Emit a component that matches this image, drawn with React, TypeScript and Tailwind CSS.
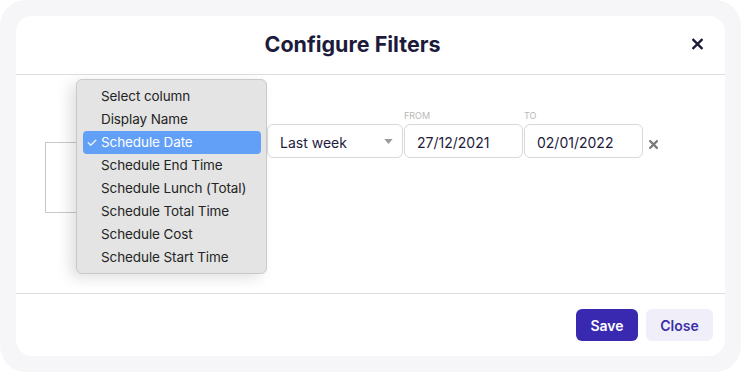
import { useState } from "react";

const columns = [
  "Select column",
  "Display Name",
  "Schedule Date",
  "Schedule End Time",
  "Schedule Lunch (Total)",
  "Schedule Total Time",
  "Schedule Cost",
  "Schedule Start Time",
];

function CloseIcon({ className, width = 2.6 }: { className?: string; width?: number }) {
  return (
    <svg viewBox="0 0 12 12" className={className} fill="none" stroke="currentColor" strokeWidth={width} strokeLinecap="square">
      <path d="M1.5 1.5 10.5 10.5M10.5 1.5 1.5 10.5" />
    </svg>
  );
}

function ColumnMenu({ selected }: { selected: string }) {
  return (
    <div className="absolute left-[60px] top-[4px] w-[191px] h-[195px] rounded-md border border-[#c9c9c9] bg-[#e3e4e3] pt-[5px] pl-[6px] pr-[5px] text-[13.5px] tracking-[-0.1px] shadow-[-6px_4px_14px_rgba(0,0,0,0.12)]">
      {columns.map((c) => {
        const active = c === selected;
        return (
          <div
            key={c}
            className={
              active
                ? "relative h-[23px] flex items-center pl-[18px] rounded-[4px] bg-[#62a0f8] text-white"
                : "relative h-[23px] flex items-center pl-[18px] text-[#242424]"
            }
          >
            {active && <span className="absolute left-[3px] text-[13px]">✓</span>}
            {c}
          </div>
        );
      })}
    </div>
  );
}

export default function App() {
  const [column] = useState("Schedule Date");

  return (
    <div className="w-[741px] h-[372px] bg-white font-['Inter',sans-serif]">
      <div className="h-full rounded-[26px] bg-[#f6f6f9] p-4">
        <div className="h-full rounded-[16px] bg-white flex flex-col">
          <div className="h-[59px] shrink-0 border-b border-[#dedede] relative flex items-center justify-center pr-[36px]">
            <h2 className="font-bold text-[21.5px] text-[#1d1b3c] tracking-[0px] mt-[-2px]">
              Configure Filters
            </h2>
            <button className="absolute right-[22px] top-[22px] text-[#1d1b3c]">
              <CloseIcon className="w-[11px] h-[12px]" />
            </button>
          </div>

          <div className="flex-1 relative text-[14px]">
            <div className="flex items-start pl-[29px] pt-[49px]">
              <div className="w-[60px] h-[71px] mt-[18px] border border-[#c8c8c8] border-r-0 shrink-0" />
              <div className="w-[161px] h-[34px] border-r-2 border-[#2b1d9e] rounded-r-md shrink-0" />
              <div className="ml-[1px] w-[136px] h-[34px] rounded-md border border-[#d8d8d8] flex items-center pl-[12px] pr-[9px] text-[#1d1b3c]">
                <span className="flex-1 mt-[2px]">Last week</span>
                <svg viewBox="0 0 10 6" className="w-[9px] h-[5px] text-[#9a9a9a]" fill="currentColor">
                  <path d="M0 0h10L5 6z" />
                </svg>
              </div>
              <div className="relative ml-[1px]">
                <span className="absolute left-[0px] -top-[15px] text-[9px] text-[#b8b8b8]">FROM</span>
                <div className="w-[119px] h-[34px] rounded-md border border-[#d8d8d8] flex items-center pl-[12px] pt-[2px] text-[#1d1b3c]">
                  27/12/2021
                </div>
              </div>
              <div className="relative ml-[1px]">
                <span className="absolute left-[0px] -top-[15px] text-[9px] text-[#b8b8b8]">TO</span>
                <div className="w-[119px] h-[34px] rounded-md border border-[#d8d8d8] flex items-center pl-[12px] pt-[2px] text-[#1d1b3c]">
                  02/01/2022
                </div>
              </div>
              <button className="ml-[6px] h-[34px] pt-[6px] flex items-center text-[#7a7a7a]">
                <CloseIcon className="w-[9px] h-[9px]" width={3} />
              </button>
            </div>
            <ColumnMenu selected={column} />
          </div>

          <div className="h-[63px] shrink-0 border-t border-[#dedede] flex items-center justify-end gap-2 pr-[12px] text-[14px] font-semibold">
            <button className="w-[62px] h-[32px] rounded-md bg-[#3829b0] text-white">Save</button>
            <button className="w-[67px] h-[32px] rounded-md bg-[#f0eff9] text-[#3b2fa8]">Close</button>
          </div>
        </div>
      </div>
    </div>
  );
}
